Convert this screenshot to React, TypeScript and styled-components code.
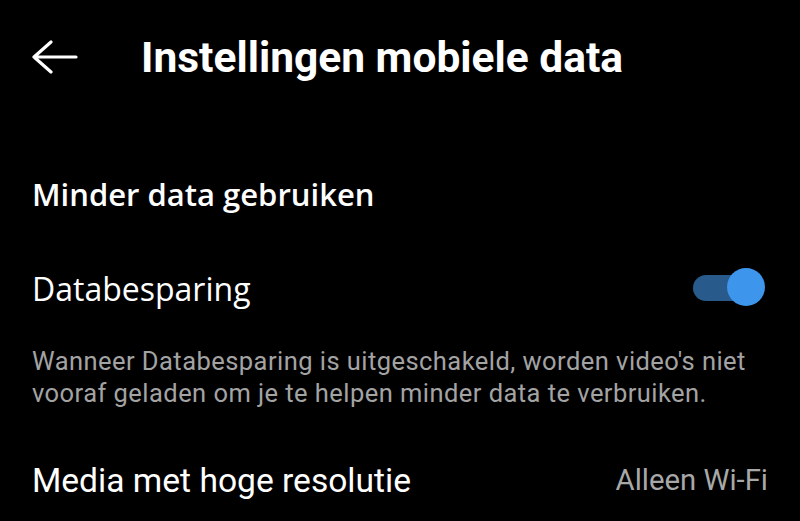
import React from 'react';
import styled, { createGlobalStyle } from 'styled-components';

const GlobalStyle = createGlobalStyle`
  html, body {
    margin: 0;
    padding: 0;
    background: #000;
  }
  * {
    box-sizing: border-box;
  }
`;

const Screen = styled.div`
  width: 800px;
  height: 521px;
  background: #000;
  color: #fff;
  overflow: hidden;
  font-family: Roboto, 'Noto Sans', sans-serif;
`;

const TopBar = styled.header`
  display: flex;
  align-items: center;
  height: 114px;
  padding: 0 0 0 30px;
`;

const BackButton = styled.button`
  display: flex;
  align-items: center;
  justify-content: flex-start;
  width: 111px;
  height: 48px;
  padding: 0 0 0 2px;
  background: none;
  border: none;
  color: #fff;
`;

const Title = styled.h1`
  margin: 0;
  font-family: Roboto, sans-serif;
  font-weight: 700;
  font-size: 42.5px;
`;

const Section = styled.section`
  padding: 0 32px;
`;

const SectionHeader = styled.h2`
  margin: 0;
  padding: 60px 0 0;
  height: 130px;
  font-family: 'Open Sans', sans-serif;
  font-weight: 600;
  font-size: 31px;
  line-height: 40px;
`;

const Row = styled.div<{ $height: number; $gap?: number }>`
  display: flex;
  align-items: center;
  justify-content: space-between;
  height: ${(p) => p.$height}px;
  margin-top: ${(p) => p.$gap || 0}px;
`;

const RowLabel = styled.span<{ $font?: string; $size: number }>`
  font-family: ${(p) => p.$font || 'Roboto'}, sans-serif;
  font-size: ${(p) => p.$size}px;
`;

const RowValue = styled.span`
  font-family: Roboto, sans-serif;
  font-size: 29.3px;
  color: #a8a8a8;
`;

const Description = styled.p`
  margin: 13px 0 0;
  font-family: Roboto, sans-serif;
  font-size: 25.5px;
  letter-spacing: 0.45px;
  line-height: 32px;
  color: #a3a3a3;
`;

const Track = styled.div`
  position: relative;
  width: 67px;
  height: 26px;
  margin-right: 8px;
  border-radius: 13px;
  background: #295a8c;
`;

const Thumb = styled.div`
  position: absolute;
  right: -5px;
  top: 50%;
  width: 38px;
  height: 38px;
  margin-top: -20px;
  border-radius: 50%;
  background: #3d95ec;
`;

const Toggle = () => (
  <Track>
    <Thumb />
  </Track>
);

const ArrowLeft = () => (
  <svg width="46" height="34" viewBox="0 0 46 34" fill="none" stroke="#fff" strokeWidth="3.2" strokeLinecap="round" strokeLinejoin="round">
    <path d="M44 17H2M19 2L2 17l17 15" />
  </svg>
);

const App = () => (
  <Screen>
    <GlobalStyle />
    <TopBar>
      <BackButton>
        <ArrowLeft />
      </BackButton>
      <Title>Instellingen mobiele data</Title>
    </TopBar>
    <Section>
      <SectionHeader>Minder data gebruiken</SectionHeader>
      <Row $height={88}>
        <RowLabel $font="'Open Sans'" $size={32}>
          Databesparing
        </RowLabel>
        <Toggle />
      </Row>
      <Description>
        Wanneer Databesparing is uitgeschakeld, worden video's niet vooraf geladen om je te helpen minder data te verbruiken.
      </Description>
      <Row $height={60} $gap={41}>
        <RowLabel $size={33.6}>Media met hoge resolutie</RowLabel>
        <RowValue>Alleen Wi-Fi</RowValue>
      </Row>
    </Section>
  </Screen>
);

export default App;
